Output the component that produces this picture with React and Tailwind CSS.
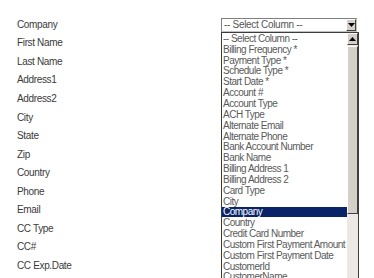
import React from "react";

const labels = [
  "Company",
  "First Name",
  "Last Name",
  "Address1",
  "Address2",
  "City",
  "State",
  "Zip",
  "Country",
  "Phone",
  "Email",
  "CC Type",
  "CC#",
  "CC Exp.Date",
];

const options = [
  "-- Select Column --",
  "Billing Frequency *",
  "Payment Type *",
  "Schedule Type *",
  "Start Date *",
  "Account #",
  "Account Type",
  "ACH Type",
  "Alternate Email",
  "Alternate Phone",
  "Bank Account Number",
  "Bank Name",
  "Billing Address 1",
  "Billing Address 2",
  "Card Type",
  "City",
  "Company",
  "Country",
  "Credit Card Number",
  "Custom First Payment Amount",
  "Custom First Payment Date",
  "CustomerId",
  "CustomerName",
];

const Arrow = ({ up }) => (
  <svg width="7" height="4" viewBox="0 0 7 4">
    {up ? <path d="M3.5 0 L7 4 L0 4 Z" fill="#000" /> : <path d="M0 0 L7 0 L3.5 4 Z" fill="#000" />}
  </svg>
);

const BevelButton = ({ className, children }) => (
  <div
    className={
      "flex items-center justify-center bg-[#d4d0c8] border border-t-white border-l-white border-r-[#404040] border-b-[#404040] " +
      (className || "")
    }
  >
    {children}
  </div>
);

export default function App() {
  const selected = "Company";

  return (
    <div
      className="w-[374px] h-[278px] bg-white overflow-hidden flex"
      style={{ fontFamily: '"Liberation Sans", Arial, sans-serif' }}
    >
      {/* Field labels */}
      <div className="w-[221px] pl-[17px] pt-[15px] flex flex-col">
        {labels.map((l) => (
          <div key={l} className="h-[18.55px] flex items-center text-[10px] tracking-[-0.35px] text-[#3a3a3a]">
            {l}
          </div>
        ))}
      </div>

      {/* Column select, open */}
      <div className="pt-[18px] flex flex-col">
        <div className="w-[136px] h-[14px] flex border border-t-[#808080] border-l-[#808080] border-r-[#c0c0c0] border-b-[#c0c0c0] bg-white">
          <div className="flex-1 pl-[2px] text-[10px] leading-[12px] tracking-[-0.3px] text-[#555]">
            -- Select Column --
          </div>
          <BevelButton className="w-[10px] h-[12px]">
            <Arrow />
          </BevelButton>
        </div>

        <div className="w-[138px] h-[260px] flex border border-[#3c3c3c] bg-white">
          <div className="flex-1 flex flex-col">
            {options.map((o) => (
              <div
                key={o}
                className={
                  "h-[10.85px] shrink-0 pl-[1px] flex items-center text-[10px] tracking-[-0.5px] whitespace-nowrap " +
                  (o === selected ? "bg-[#0a246a] text-white" : "text-[#5a5a5a]")
                }
              >
                {o}
              </div>
            ))}
          </div>

          {/* scrollbar */}
          <div className="w-[11px] flex flex-col bg-[#ece9e4]">
            <BevelButton className="w-[11px] h-[12px] shrink-0">
              <Arrow up />
            </BevelButton>
            <BevelButton className="w-[11px] h-[168px] shrink-0 mt-[1px]" />
          </div>
        </div>
      </div>
    </div>
  );
}
